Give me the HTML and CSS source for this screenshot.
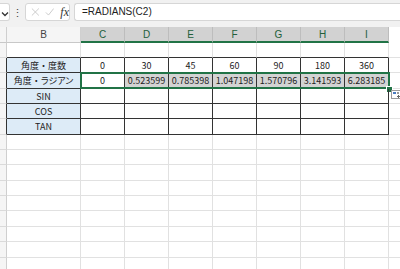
FILE: index.html
```html
<html>
<head>
<meta charset="UTF-8">
<title>RADIANS</title>
<link rel="stylesheet" href="styles.css">
</head>
<body>
<div class="toolbar">
	<div class="namebox">
		<svg width="8" height="6" viewBox="0 0 8 6"><path d="M1 1.5 L4 4.5 L7 1.5" fill="none" stroke="#333" stroke-width="1.3"/></svg>
	</div>
	<div class="dots">&#8942;</div>
	<div class="fxbox">
		<svg width="10" height="10" viewBox="0 0 10 10"><path d="M1 1 L9 9 M9 1 L1 9" stroke="#c4c4c4" stroke-width="1"/></svg>
		<svg width="11" height="10" viewBox="0 0 11 10"><path d="M1 5.5 L4 8.5 L10 1" fill="none" stroke="#c4c4c4" stroke-width="1"/></svg>
		<span class="fx">fx</span>
	</div>
	<div class="formula">=RADIANS(C2)</div>
</div>

<div class="sheet">
	<div class="row hdr">
		<div class="c rh"></div>
		<div class="c colB">B</div>
		<div class="c sel">C</div>
		<div class="c sel">D</div>
		<div class="c sel">E</div>
		<div class="c sel">F</div>
		<div class="c sel">G</div>
		<div class="c sel">H</div>
		<div class="c sel">I</div>
		<div class="c end"></div>
	</div>
	<div class="row">
		<div class="c rh"></div>
		<div class="c top"></div><div class="c top"></div><div class="c top"></div><div class="c top"></div>
		<div class="c top"></div><div class="c top"></div><div class="c top"></div><div class="c top"></div>
		<div class="c end"></div>
	</div>
	<div class="row">
		<div class="c rh edge"></div>
		<div class="c d label">角度・度数</div>
		<div class="c d">0</div><div class="c d">30</div><div class="c d">45</div><div class="c d">60</div>
		<div class="c d">90</div><div class="c d">180</div><div class="c d">360</div>
		<div class="c end"></div>
	</div>
	<div class="row tall pick">
		<div class="c rh edge"></div>
		<div class="c d label">角度・<span class="kana">ラジアン</span></div>
		<div class="c d">0</div>
		<div class="c d shade">0.523599</div><div class="c d shade">0.785398</div><div class="c d shade">1.047198</div>
		<div class="c d shade">1.570796</div><div class="c d shade">3.141593</div><div class="c d shade">6.283185</div>
		<div class="c end"></div>
		<div class="selbox"></div>
		<div class="handle"></div>
		<svg class="quick" width="10" height="9" viewBox="0 0 10 9"><rect x="0.5" y="0.5" width="9" height="8" fill="#fff" stroke="#9a9a9a"/><rect x="2" y="2" width="3" height="2" fill="#4a7cc0"/><rect x="6" y="2" width="2" height="2" fill="#9a9a9a"/><path d="M6 6.5 H9 M7.5 5 V8" stroke="#666" stroke-width="1"/></svg>
	</div>
	<div class="row">
		<div class="c rh edge"></div>
		<div class="c d label">SIN</div>
		<div class="c d"></div><div class="c d"></div><div class="c d"></div><div class="c d"></div>
		<div class="c d"></div><div class="c d"></div><div class="c d"></div>
		<div class="c end"></div>
	</div>
	<div class="row">
		<div class="c rh edge"></div>
		<div class="c d label">COS</div>
		<div class="c d"></div><div class="c d"></div><div class="c d"></div><div class="c d"></div>
		<div class="c d"></div><div class="c d"></div><div class="c d"></div>
		<div class="c end"></div>
	</div>
	<div class="row tall">
		<div class="c rh edge"></div>
		<div class="c d label">TAN</div>
		<div class="c d"></div><div class="c d"></div><div class="c d"></div><div class="c d"></div>
		<div class="c d"></div><div class="c d"></div><div class="c d"></div>
		<div class="c end"></div>
	</div>
	<div class="row"><div class="c rh"></div><div class="c"></div><div class="c"></div><div class="c"></div><div class="c"></div><div class="c"></div><div class="c"></div><div class="c"></div><div class="c"></div><div class="c end"></div></div>
	<div class="row"><div class="c rh"></div><div class="c"></div><div class="c"></div><div class="c"></div><div class="c"></div><div class="c"></div><div class="c"></div><div class="c"></div><div class="c"></div><div class="c end"></div></div>
	<div class="row tall"><div class="c rh"></div><div class="c"></div><div class="c"></div><div class="c"></div><div class="c"></div><div class="c"></div><div class="c"></div><div class="c"></div><div class="c"></div><div class="c end"></div></div>
	<div class="row"><div class="c rh"></div><div class="c"></div><div class="c"></div><div class="c"></div><div class="c"></div><div class="c"></div><div class="c"></div><div class="c"></div><div class="c"></div><div class="c end"></div></div>
	<div class="row"><div class="c rh"></div><div class="c"></div><div class="c"></div><div class="c"></div><div class="c"></div><div class="c"></div><div class="c"></div><div class="c"></div><div class="c"></div><div class="c end"></div></div>
	<div class="row tall"><div class="c rh"></div><div class="c"></div><div class="c"></div><div class="c"></div><div class="c"></div><div class="c"></div><div class="c"></div><div class="c"></div><div class="c"></div><div class="c end"></div></div>
	<div class="row"><div class="c rh"></div><div class="c"></div><div class="c"></div><div class="c"></div><div class="c"></div><div class="c"></div><div class="c"></div><div class="c"></div><div class="c"></div><div class="c end"></div></div>
	<div class="row tall"><div class="c rh"></div><div class="c"></div><div class="c"></div><div class="c"></div><div class="c"></div><div class="c"></div><div class="c"></div><div class="c"></div><div class="c"></div><div class="c end"></div></div>
	<div class="row"><div class="c rh"></div><div class="c"></div><div class="c"></div><div class="c"></div><div class="c"></div><div class="c"></div><div class="c"></div><div class="c"></div><div class="c"></div><div class="c end"></div></div>
</div>
</body>
</html>
```

FILE: styles.css
```css
html, body{
	margin:0;
	padding:0;
	background:#fff;
	overflow:hidden;
}

body{
	width:400px;
	height:269px;
	font-family:"Noto Sans CJK JP", "Noto Sans", sans-serif;
	color:#222;
}

.toolbar{
	height:27px;
	background:#f1f1f1;
	display:flex;
	align-items:flex-start;
	padding-top:3px;
	box-sizing:border-box;
}

.namebox{
	width:10px;
	height:18px;
	background:#fff;
	border:1px solid #d6d6d6;
	border-left:none;
	border-radius:0 3px 3px 0;
	box-sizing:border-box;
	display:flex;
	align-items:center;
	justify-content:center;
	padding-top:3px;
}

.dots{
	width:15px;
	text-align:center;
	font-size:11px;
	line-height:18px;
	color:#444;
}

.fxbox{
	width:45px;
	height:18px;
	background:#fff;
	border:1px solid #d6d6d6;
	border-radius:3px;
	box-sizing:border-box;
	display:flex;
	align-items:center;
	gap:5px;
	padding-left:5px;
}

.fx{
	font-family:"Liberation Serif", serif;
	font-style:italic;
	font-size:12px;
	color:#333;
	margin-left:1px;
}

.formula{
	flex:1;
	height:18px;
	margin-left:4px;
	background:#fff;
	border:1px solid #d6d6d6;
	border-right:none;
	border-radius:3px 0 0 3px;
	box-sizing:border-box;
	font-family:"Liberation Sans", sans-serif;
	font-size:10px;
	line-height:16px;
	padding-left:7px;
	color:#222;
}

.row{
	display:grid;
	grid-template-columns:7px 74px repeat(7, 44px) 1fr;
	height:15px;
	position:relative;
}

.tall{
	height:16px;
}

.hdr{
	height:16px;
}

.c{
	box-sizing:border-box;
	border-right:1px solid #e1e1e1;
	border-bottom:1px solid #e1e1e1;
	display:flex;
	align-items:center;
	justify-content:center;
	font-size:9px;
	line-height:1;
	white-space:nowrap;
	overflow:hidden;
}

.kana{
	font-feature-settings:"palt";
}

.c.end{
	border-right:none;
}

.rh{
	background:#f5f5f5;
	border-right-color:#cfcfcf;
	border-bottom-color:#dadada;
}

.hdr .c{
	font-family:"Liberation Sans", sans-serif;
	font-size:10px;
	padding-top:1px;
}

.hdr .rh{
	border-bottom-color:#c8c8c8;
}

.colB{
	background:#f5f5f5;
	color:#444;
	border-right-color:#d0d0d0;
	border-bottom-color:#c8c8c8;
}

.sel{
	background:#d2d2d2;
	color:#22603b;
	border-right-color:#bdbdbd;
	border-bottom:2px solid #217346;
}

.hdr .end{
	background:#fff;
	border-bottom:none;
}

.top{
	border-bottom-color:#333;
}

.rh.edge{
	border-right-color:#333;
}

.d{
	border-right-color:#333;
	border-bottom-color:#333;
}

.label{
	background:#ddebf7;
}

.shade{
	background:#d3d3d3;
}

.selbox{
	position:absolute;
	left:80px;
	top:-1px;
	width:310px;
	height:17px;
	border:2px solid #217346;
	box-sizing:border-box;
}

.handle{
	position:absolute;
	left:386px;
	top:13px;
	width:5px;
	height:5px;
	background:#217346;
	border:1px solid #fff;
}

.quick{
	position:absolute;
	left:391px;
	top:17px;
}
```
